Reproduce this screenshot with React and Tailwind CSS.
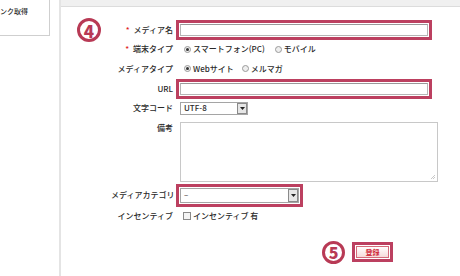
import React from "react";

function Radio({ checked }) {
  return (
    <span className="inline-flex h-[7px] w-[7px] shrink-0 items-center justify-center rounded-full border border-[#9a9a9a] bg-[#eeeeee]">
      {checked && <span className="h-[3px] w-[3px] rounded-full bg-[#333]" />}
    </span>
  );
}

function Frame({ on, children }) {
  return (
    <div className={on ? "border-[3px] border-[#bc4060] bg-white p-px" : "border-[3px] border-transparent p-px"}>
      {children}
    </div>
  );
}

function Arrow() {
  return (
    <span className="flex h-full w-[10px] items-center justify-center border border-[#8a8a8a] bg-[#e6e6e6]">
      <svg width="5" height="3" viewBox="0 0 5 3">
        <path d="M0 0h5L2.5 3z" fill="#222" />
      </svg>
    </span>
  );
}

function Circle({ n, size }) {
  return (
    <div className={`flex items-center justify-center rounded-full border-[3px] border-[#b83a55] font-black text-[#b83a55] ${size}`}>
      {n}
    </div>
  );
}

function Row({ label, req, h, top, children }) {
  return (
    <div className={`flex ${top ? "items-start" : "items-center"} ${h}`}>
      <div className={`w-[62px] shrink-0 whitespace-nowrap text-right text-[8px] leading-[10px] font-medium text-[#2a2a2a] ${top ? "mt-[6px]" : ""}`}>
        {req && <span className="mr-[4px] text-[#e02020]">*</span>}
        {label}
      </div>
      <div className="ml-[3px]">{children}</div>
    </div>
  );
}

export default function App() {
  return (
    <div className="flex h-[276px] w-[460px] overflow-hidden bg-white font-['Noto_Sans_CJK_JP',sans-serif] text-[#2a2a2a]">
      <div className="w-[59px] shrink-0">
        <div className="h-[36px] w-[50px] border-r border-b border-[#cfcfcf] pt-[6px] text-[7px] leading-[10px] font-medium whitespace-nowrap">
          ンク取得
        </div>
      </div>

      <div className="flex-1 border-l-2 border-[#e4e4e4]">
        <div className="h-[7px] border-b border-[#dcdcdc] bg-[#f0f0f0]" />

        <div className="flex pt-[13px]">
          <div className="w-[50px] shrink-0">
            <div className="-mt-[2px] ml-[16px]">
              <Circle n="4" size="h-[24px] w-[24px] text-[17px] leading-none" />
            </div>
          </div>

          <div className="flex flex-col">
            <Row label="メディア名" req h="h-[20px]">
              <Frame on>
                <div className="h-[12px] w-[248px] border border-[#b5b5b5] border-t-[#999] bg-white" />
              </Frame>
            </Row>

            <Row label="端末タイプ" req h="h-[18px]">
              <div className="flex items-center pl-[8px] text-[8px] leading-[10px] font-medium">
                <Radio checked />
                <span className="ml-[2px]">スマートフォン(PC)</span>
                <span className="ml-[10px] flex items-center">
                  <Radio />
                  <span className="ml-[2px]">モバイル</span>
                </span>
              </div>
            </Row>

            <Row label="メディアタイプ" h="h-[21px]">
              <div className="flex items-center pl-[8px] text-[8px] leading-[10px] font-medium">
                <Radio checked />
                <span className="ml-[2px]">Webサイト</span>
                <span className="ml-[8px] flex items-center">
                  <Radio />
                  <span className="ml-[2px]">メルマガ</span>
                </span>
              </div>
            </Row>

            <Row label="URL" h="h-[20px]">
              <Frame on>
                <div className="h-[12px] w-[248px] border border-[#b5b5b5] border-t-[#999] bg-white" />
              </Frame>
            </Row>

            <Row label="文字コード" h="h-[18px]">
              <div className="ml-[4px] flex h-[13px] w-[68px] items-center justify-between border border-[#a5a5a5] bg-white">
                <span className="pl-[3px] text-[8px] leading-[10px] font-medium">UTF-8</span>
                <Arrow />
              </div>
            </Row>

            <Row label="備考" h="h-[66px]" top>
              <div className="ml-[4px] mt-[5px] flex h-[60px] w-[258px] items-end justify-end border border-[#c8c8c8] bg-white">
                <svg width="6" height="6" viewBox="0 0 6 6" className="mb-px mr-px">
                  <path d="M5 1L1 5M5 3L3 5" stroke="#bbb" strokeWidth="0.8" />
                </svg>
              </div>
            </Row>

            <Row label="メディアカテゴリ" h="h-[24px]">
              <Frame on>
                <div className="flex h-[15px] w-[119px] items-center justify-between border border-[#a5a5a5] bg-white">
                  <span className="pl-[3px] text-[8px] leading-[10px]">–</span>
                  <Arrow />
                </div>
              </Frame>
            </Row>

            <Row label="インセンティブ" h="h-[18px]">
              <div className="flex items-center pl-[7px] text-[8px] leading-[10px] font-medium">
                <span className="h-[8px] w-[8px] shrink-0 border border-[#8a8a8a] bg-[#f4f4f4]" />
                <span className="ml-[2px]">インセンティブ 有</span>
              </div>
            </Row>

            <div className="mt-[17px] flex h-[20px] items-center pl-[211px]">
              <Circle n="5" size="h-[23px] w-[23px] text-[16px] leading-none" />
              <div className="ml-[7px] border-[3px] border-[#bc4060] bg-white p-px">
                <div className="flex h-[12px] w-[33px] items-center justify-center border border-[#d46a7a] bg-gradient-to-b from-white to-[#f5dada] text-[7px] leading-none font-bold text-[#d02a3a]">
                  登録
                </div>
              </div>
            </div>
          </div>
        </div>
      </div>
    </div>
  );
}
